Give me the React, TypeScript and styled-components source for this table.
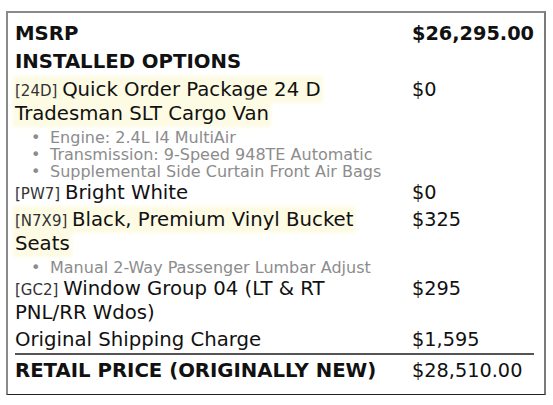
import React from "react";
import styled, { createGlobalStyle } from "styled-components";

const Global = createGlobalStyle`
  html, body { margin: 0; padding: 0; background: #ffffff; }
  body { font-family: "DejaVu Sans", Verdana, sans-serif; color: #111; }
`;

const Sticker = styled.div`
  box-sizing: border-box;
  margin: 11px 0 0 6px;
  width: 540px;
  height: 384px;
  border-top: 2px solid #8a8a8a;
  border-left: 2px solid #8a8a8a;
  border-right: 2px solid #7a7a7a;
  border-bottom: 1px solid #222;
  padding: 7px 10px 0 7px;
`;

const Row = styled.div<{ $total?: boolean; $head?: boolean }>`
  display: grid;
  grid-template-columns: 385px 1fr;
  column-gap: 12px;
  font-size: 19.7px;
  line-height: 24px;
  padding: ${(p) => (p.$head ? "2px 0 2px" : p.$total ? "3.5px 0 0" : "1.5px 0")};
  font-weight: ${(p) => (p.$head || p.$total ? 700 : 400)};
  border-top: ${(p) => (p.$total ? "2px solid #555" : "none")};
`;

const Desc = styled.div``;

const Price = styled.div<{ $weight?: number }>`
  font-weight: ${(p) => p.$weight ?? "inherit"};
  font-size: 19.3px;
  white-space: nowrap;
`;

const Label = styled.span<{ $hl?: boolean }>`
  background: ${(p) => (p.$hl ? "#fdfbe4" : "transparent")};
  box-shadow: ${(p) => (p.$hl ? "0 0 4px 2px #fdfbe4" : "none")};
  -webkit-box-decoration-break: clone;
  box-decoration-break: clone;
`;

const Code = styled.span`
  font-size: 15px;
  line-height: 15px;
  color: #333;
`;

const Features = styled.ul`
  list-style: none;
  margin: 3px 0 -2px;
  padding: 0 0 0 16px;
  font-size: 16px;
  line-height: 17px;
  color: #8c8c8c;
`;

const Feature = styled.li`
  display: flex;
  &::before {
    content: "•";
    flex: none;
    width: 19px;
  }
`;

type Item = {
  code?: string;
  text: string;
  price: string;
  hl?: boolean;
  features?: string[];
};

const items: Item[] = [
  {
    code: "24D",
    text: "Quick Order Package 24 D Tradesman SLT Cargo Van",
    price: "$0",
    hl: true,
    features: [
      "Engine: 2.4L I4 MultiAir",
      "Transmission: 9-Speed 948TE Automatic",
      "Supplemental Side Curtain Front Air Bags",
    ],
  },
  { code: "PW7", text: "Bright White", price: "$0" },
  {
    code: "N7X9",
    text: "Black, Premium Vinyl Bucket Seats",
    price: "$325",
    hl: true,
    features: ["Manual 2-Way Passenger Lumbar Adjust"],
  },
  { code: "GC2", text: "Window Group 04 (LT & RT PNL/RR Wdos)", price: "$295" },
  { text: "Original Shipping Charge", price: "$1,595" },
];

export default function App() {
  return (
    <>
      <Global />
      <Sticker>
        <Row $head>
          <Desc>MSRP</Desc>
          <Price $weight={700}>$26,295.00</Price>
        </Row>
        <Row $head>
          <Desc>INSTALLED OPTIONS</Desc>
          <Price />
        </Row>
        {items.map((it) => (
          <Row key={it.text}>
            <Desc>
              <Label $hl={it.hl}>
                {it.code && <Code>[{it.code}] </Code>}
                {it.text}
              </Label>
              {it.features && (
                <Features>
                  {it.features.map((f) => (
                    <Feature key={f}>{f}</Feature>
                  ))}
                </Features>
              )}
            </Desc>
            <Price>{it.price}</Price>
          </Row>
        ))}
        <Row $total>
          <Desc>RETAIL PRICE (ORIGINALLY NEW)</Desc>
          <Price $weight={400}>$28,510.00</Price>
        </Row>
      </Sticker>
    </>
  );
}
